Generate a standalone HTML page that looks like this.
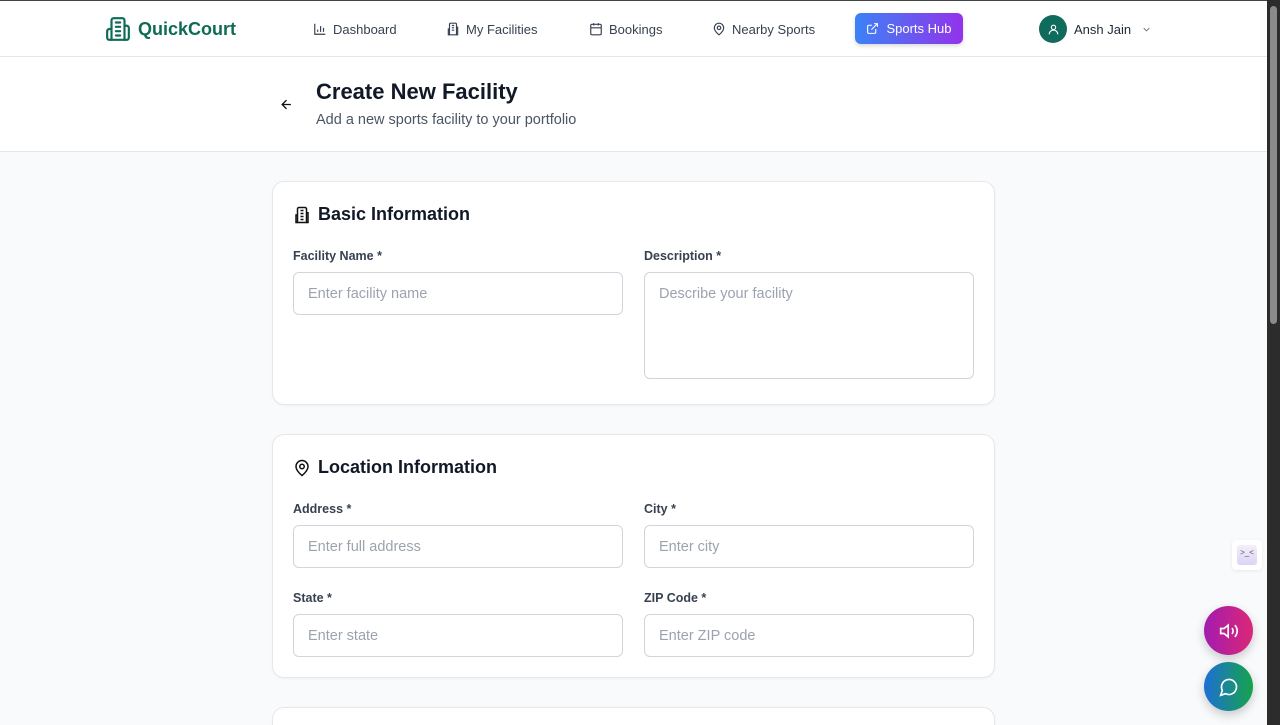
<!DOCTYPE html>
<html style="overflow:hidden;height:725px"><head><meta charset="utf-8"><style>
*{box-sizing:border-box;margin:0;padding:0}
body{width:1280px;height:725px;overflow:hidden;background:#f9fafb;font-family:"Liberation Sans",sans-serif;color:#111827;position:relative}
.top{position:absolute;left:0;top:0;width:1267px;height:1px;background:#444}
header{position:absolute;left:0;top:1px;width:1267px;height:56px;background:#fff;border-bottom:1px solid #e5e7eb}
.logo{position:absolute;left:105px;top:15px;display:flex;align-items:center;gap:7px;color:#0f6b55;font-weight:700;font-size:18px}
.nav{position:absolute;top:0;height:56px;display:flex;align-items:center;gap:6px;font-size:13px;color:#374151}
.hub{position:absolute;left:855px;top:12px;width:108px;height:31px;border-radius:6px;background:linear-gradient(90deg,#3b82f6,#9333ea);color:#fff;font-size:13px;display:flex;align-items:center;justify-content:center;gap:7px;box-shadow:0 2px 4px rgba(0,0,0,.15)}
.av{position:absolute;left:1039px;top:14px;width:28px;height:28px;border-radius:50%;background:#0f6b5c;display:flex;align-items:center;justify-content:center}
.sub{position:absolute;left:0;top:57px;width:1267px;height:95px;background:#fff;border-bottom:1px solid #e5e7eb}
h1{position:absolute;left:316px;top:79px;font-size:22px;font-weight:700}
.desc{position:absolute;left:316px;top:112px;font-size:14.5px;color:#4b5563}
.card{position:absolute;left:272px;width:723px;background:#fff;border:1px solid #e5e7eb;border-radius:12px;box-shadow:0 1px 2px rgba(0,0,0,.04)}
.ct{position:absolute;left:20px;top:22px;font-size:18px;font-weight:700;display:flex;align-items:center;gap:7px}
.lb{position:absolute;font-size:12.5px;font-weight:600;color:#374151}
.in{position:absolute;width:330px;height:43px;border:1px solid #d1d5db;border-radius:6px;padding:13px 14px;font-size:14.5px;color:#9ca3af}
.sb{position:absolute;left:1267px;top:0;width:13px;height:725px;background:#2c2c2c}
.th{position:absolute;left:3px;top:6px;width:7px;height:318px;border-radius:4px;background:#8a8a8a}
.fab{position:absolute;left:1204px;width:49px;height:49px;border-radius:50%;display:flex;align-items:center;justify-content:center;box-shadow:0 4px 10px rgba(0,0,0,.2)}
</style></head><body>
<div class="top"></div>
<header>
<div class="logo"><svg width="26" height="26" viewBox="0 0 24 24" fill="none" stroke="#0f6b55" stroke-width="2" stroke-linecap="round" stroke-linejoin="round"><path d="M6 22V4a2 2 0 0 1 2-2h8a2 2 0 0 1 2 2v18Z"/><path d="M6 12H4a2 2 0 0 0-2 2v6a2 2 0 0 0 2 2h2"/><path d="M18 9h2a2 2 0 0 1 2 2v9a2 2 0 0 1-2 2h-2"/><path d="M10 6h4M10 10h4M10 14h4M10 18h4"/></svg>QuickCourt</div>
<div class="nav" style="left:313px"><svg width="14" height="14" viewBox="0 0 24 24" fill="none" stroke="#374151" stroke-width="2"><path d="M3 3v18h18M8 17v-4M13 17V7M18 17v-7"/></svg>Dashboard</div>
<div class="nav" style="left:446px"><svg width="14" height="14" viewBox="0 0 24 24" fill="none" stroke="#374151" stroke-width="2"><path d="M6 22V4a2 2 0 0 1 2-2h8a2 2 0 0 1 2 2v18Z"/><path d="M6 12H4v10h2M18 9h2v13h-2M10 6h4M10 10h4M10 14h4"/></svg>My Facilities</div>
<div class="nav" style="left:589px"><svg width="14" height="14" viewBox="0 0 24 24" fill="none" stroke="#374151" stroke-width="2"><rect x="3" y="4" width="18" height="18" rx="2"/><path d="M16 2v4M8 2v4M3 10h18"/></svg>Bookings</div>
<div class="nav" style="left:712px"><svg width="14" height="14" viewBox="0 0 24 24" fill="none" stroke="#374151" stroke-width="2"><path d="M20 10c0 6-8 12-8 12s-8-6-8-12a8 8 0 0 1 16 0Z"/><circle cx="12" cy="10" r="3"/></svg>Nearby Sports</div>
<div class="hub"><svg width="13" height="13" viewBox="0 0 24 24" fill="none" stroke="#fff" stroke-width="2"><path d="M15 3h6v6M10 14 21 3M18 13v6a2 2 0 0 1-2 2H5a2 2 0 0 1-2-2V8a2 2 0 0 1 2-2h6"/></svg>Sports Hub</div>
<div class="av"><svg width="13" height="13" viewBox="0 0 24 24" fill="none" stroke="#fff" stroke-width="2"><circle cx="12" cy="8" r="4"/><path d="M20 21a8 8 0 0 0-16 0"/></svg></div>
<div class="nav" style="left:1074px;gap:10px;color:#1f2937">Ansh Jain <svg width="11" height="11" viewBox="0 0 24 24" fill="none" stroke="#6b7280" stroke-width="2"><path d="m6 9 6 6 6-6"/></svg></div>
</header>
<div class="sub"></div>
<svg style="position:absolute;left:279px;top:97px" width="15" height="15" viewBox="0 0 24 24" fill="none" stroke="#111" stroke-width="2"><path d="M19 12H5M12 19l-7-7 7-7"/></svg>
<h1>Create New Facility</h1>
<div class="desc">Add a new sports facility to your portfolio</div>

<div class="card" style="top:181px;height:224px">
<div class="ct"><svg width="18" height="18" viewBox="0 0 24 24" fill="none" stroke="#111" stroke-width="2"><path d="M6 22V4a2 2 0 0 1 2-2h8a2 2 0 0 1 2 2v18Z"/><path d="M6 12H4v10h2M18 9h2v13h-2M10 6h4M10 10h4M10 14h4M10 18h4"/></svg>Basic Information</div>
<div class="lb" style="left:20px;top:67px">Facility Name *</div>
<div class="in" style="left:20px;top:90px">Enter facility name</div>
<div class="lb" style="left:371px;top:67px">Description *</div>
<div class="in" style="left:371px;top:90px;height:107px">Describe your facility</div>
</div>

<div class="card" style="top:434px;height:244px">
<div class="ct"><svg width="18" height="18" viewBox="0 0 24 24" fill="none" stroke="#111" stroke-width="2"><path d="M20 10c0 6-8 12-8 12s-8-6-8-12a8 8 0 0 1 16 0Z"/><circle cx="12" cy="10" r="3"/></svg>Location Information</div>
<div class="lb" style="left:20px;top:67px">Address *</div>
<div class="in" style="left:20px;top:90px">Enter full address</div>
<div class="lb" style="left:371px;top:67px">City *</div>
<div class="in" style="left:371px;top:90px">Enter city</div>
<div class="lb" style="left:20px;top:156px">State *</div>
<div class="in" style="left:20px;top:179px">Enter state</div>
<div class="lb" style="left:371px;top:156px">ZIP Code *</div>
<div class="in" style="left:371px;top:179px">Enter ZIP code</div>
</div>
<div class="card" style="top:707px;height:18px;border-bottom:none;border-radius:12px 12px 0 0"></div>

<div style="position:absolute;left:1232px;top:540px;width:30px;height:30px;background:#fff;border-radius:4px;box-shadow:0 1px 3px rgba(0,0,0,.08);display:flex;align-items:center;justify-content:center"><div style="width:20px;height:20px;border-radius:3px;background:linear-gradient(#f3f0fa,#ddd3f5);font-size:8px;color:#555;text-align:center;line-height:16px">&gt;_&lt;</div></div>
<div class="fab" style="top:606px;background:linear-gradient(90deg,#a21caf,#db2777)"><svg width="20" height="20" viewBox="0 0 24 24" fill="none" stroke="#fff" stroke-width="2"><path d="M11 5 6 9H2v6h4l5 4V5Z"/><path d="M15.5 8.5a5 5 0 0 1 0 7M19 5a10 10 0 0 1 0 14"/></svg></div>
<div class="fab" style="top:662px;background:linear-gradient(90deg,#1d6fd6,#16a34a)"><svg width="20" height="20" viewBox="0 0 24 24" fill="none" stroke="#fff" stroke-width="2"><path d="M7.9 20A9 9 0 1 0 4 16.1L2 22Z"/></svg></div>
<div class="sb"><div class="th"></div></div>
</body></html>
